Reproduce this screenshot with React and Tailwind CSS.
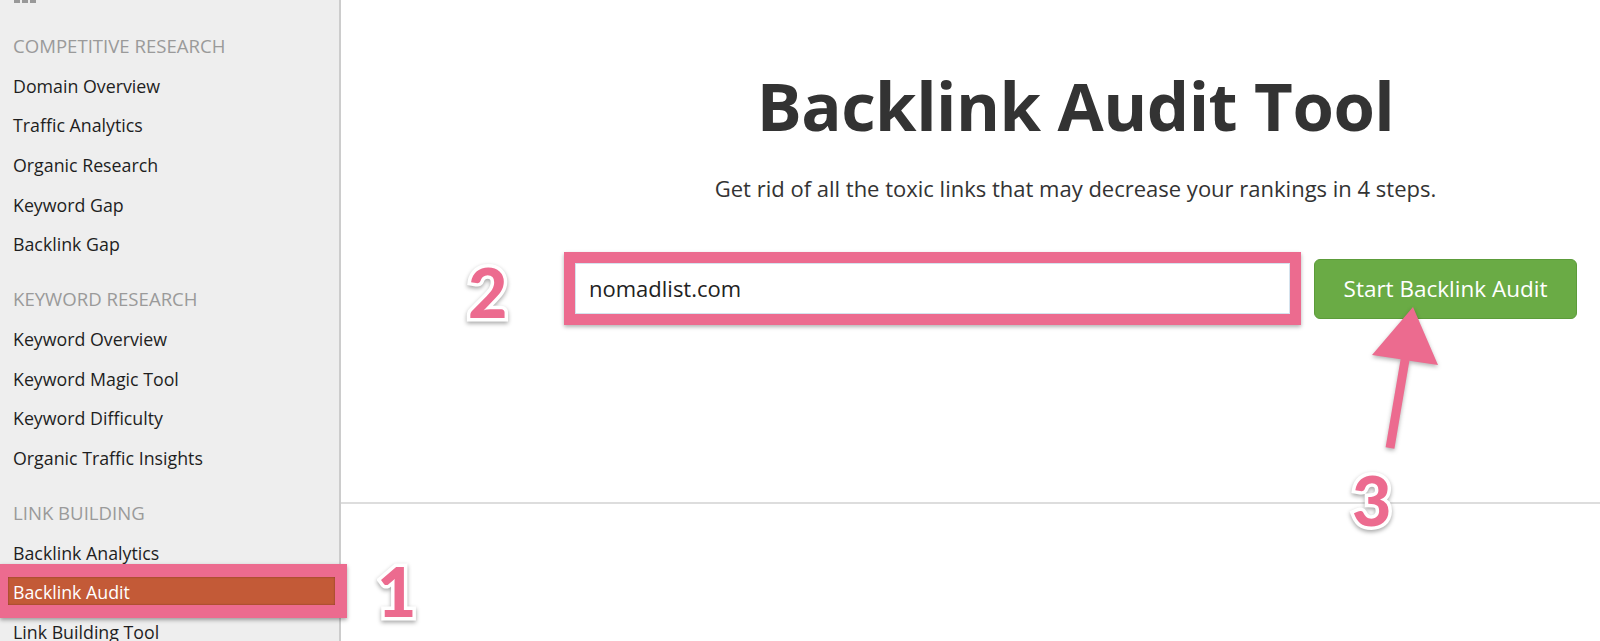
import React from 'react'

const groups = [
  {
    title: 'COMPETITIVE RESEARCH',
    items: ['Domain Overview', 'Traffic Analytics', 'Organic Research', 'Keyword Gap', 'Backlink Gap'],
  },
  {
    title: 'KEYWORD RESEARCH',
    items: ['Keyword Overview', 'Keyword Magic Tool', 'Keyword Difficulty', 'Organic Traffic Insights'],
  },
  {
    title: 'LINK BUILDING',
    items: ['Backlink Analytics', 'Backlink Audit', 'Link Building Tool'],
  },
]

function StepNumber({ children, className }) {
  return (
    <span
      className={
        'absolute font-[Lato,sans-serif] font-black text-[68px] leading-none text-[#ec6b8f] [-webkit-text-stroke:7px_white] [paint-order:stroke_fill] drop-shadow-[0_2px_2px_rgba(0,0,0,0.35)] select-none ' +
        className
      }
    >
      {children}
    </span>
  )
}

function Sidebar() {
  return (
    <aside className="w-[341px] shrink-0 bg-[#eeeeee] border-r-2 border-[#cccccc] relative z-10">
      <div className="flex gap-[2px] pl-[14px] h-[3px]">
        <span className="w-[6px] h-[3px] bg-[#999]" />
        <span className="w-[6px] h-[3px] bg-[#999]" />
        <span className="w-[6px] h-[3px] bg-[#999]" />
      </div>
      <div className="pt-[23px]">
        {groups.map((g, gi) => (
          <div key={g.title} className={gi > 0 ? 'mt-[15px]' : ''}>
            <div className="h-10 flex items-center pl-[13px] text-[18.6px] text-[#9a9a9a]">{g.title}</div>
            {g.items.map((item) =>
              item === 'Backlink Audit' ? (
                <div key={item} className="relative h-[39.7px] flex items-center pl-[13px]">
                  <div className="absolute left-0 top-[-9px] w-[347px] h-[54px] bg-[#ec6b8f] pt-[13px] pl-[8px] pr-[12px] pb-[13px] shadow-[0_2px_4px_rgba(0,0,0,0.35)]">
                    <div className="w-full h-full bg-[#c35a37] shadow-[inset_0_0_2px_rgba(0,0,0,0.4)]" />
                  </div>
                  <span className="relative text-[17.8px] text-white">{item}</span>
                </div>
              ) : (
                <div key={item} className="h-[39.7px] flex items-center pl-[13px] text-[17.8px] text-[#1e1e1e]">
                  {item}
                </div>
              )
            )}
          </div>
        ))}
      </div>
    </aside>
  )
}

export default function App() {
  return (
    <div className="relative flex h-[641px] w-[1600px] overflow-hidden bg-white font-['Open_Sans',sans-serif]">
      <Sidebar />
      <main className="flex-1 flex flex-col">
        <div className="ml-[223px] w-[1023px] pt-[66px] text-center">
          <h1 className="text-[67px] leading-[78px] font-bold text-[#333] tracking-[-0.5px]">Backlink Audit Tool</h1>
          <p className="mt-[30px] text-[22px] leading-[28px] text-[#333]">
            Get rid of all the toxic links that may decrease your rankings in 4 steps.
          </p>
        </div>
        <div className="ml-[223px] mt-[50px] flex items-center gap-[13px]">
          <div className="relative w-[737px] h-[73px] bg-[#ec6b8f] p-[11px] shadow-[0_2px_4px_rgba(0,0,0,0.3)]">
            <StepNumber className="left-[-96px] top-[6px]">2</StepNumber>
            <div className="w-full h-full bg-white border border-[#d5e3ee] flex items-center pl-[13px] text-[22px] text-[#222]">
              nomadlist.com
            </div>
          </div>
          <button className="w-[263px] h-[60px] rounded-[6px] bg-[#6aab45] border border-[#5c9c3a] text-white text-[22.5px] flex items-center justify-center">
            Start Backlink Audit
          </button>
        </div>
        <div className="mt-[177px] h-[2px] bg-[#dddddd]" />
      </main>

      <StepNumber className="left-[377px] top-[557px]">1</StepNumber>

      <svg
        className="absolute left-[1360px] top-[300px] drop-shadow-[0_2px_2px_rgba(0,0,0,0.3)]"
        width="90"
        height="160"
        viewBox="0 0 90 160"
      >
        <polygon
          points="53,7 78,65 49.4,60.7 34.4,148.8 25.6,147.2 40.6,59.3 12,55"
          fill="#ec6b8f"
        />
      </svg>
      <StepNumber className="left-[1352px] top-[466px]">3</StepNumber>
    </div>
  )
}
